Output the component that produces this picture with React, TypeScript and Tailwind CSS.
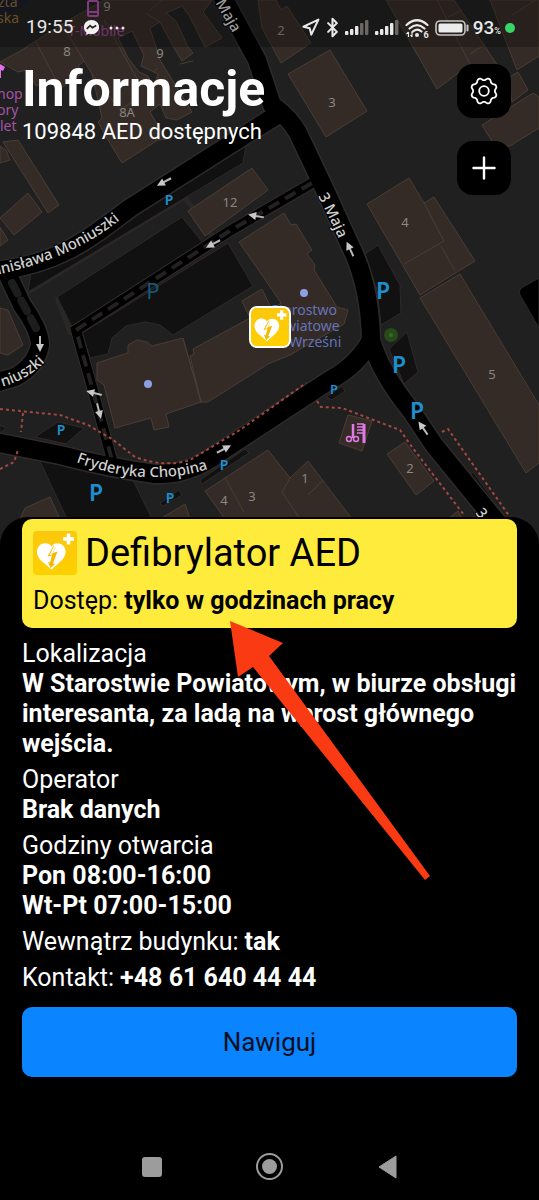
import type { ReactNode } from "react";
import { Bluetooth, Navigation } from "lucide-react";

const BUILDINGS = [
  "0,62 22,50 62,24 104,0 212,0 203,12 222,38 205,47 190,17 182,6 166,13 176,21 188,47 193,53 182,61 173,46 160,22 150,28 160,60 192,112 177,120 166,118 160,104 150,112 166,139 158,140 122,163 108,140 98,122 102,118 92,74 84,61 78,66 83,73 58,90 49,80 36,86 27,70 18,72",
  "3,142 18,140 59,205 48,213",
  "0,146 6,150 10,160 0,163",
  "0,218 28,193 42,212 14,235",
  "0,227 8,240 0,246",
  "0,308 8,310 23,345 8,355 0,353",
  "188,211 252,168 268,190 205,236",
  "239,242 284,213 291,225 296,224 312,250 307,254 315,265 314,270 337,307 348,310 344,324 290,355 268,364 208,402 201,402 190,356 194,354 193,349 250,318 242,301 262,289 272,310 281,303 262,275",
  "97,363 128,353 128,345 137,340 147,342 152,346 183,338 201,402 166,414 169,427 154,430 151,418 115,428 104,385 97,380",
  "258,0 276,0 281,10 287,6 311,43 281,63 262,28",
  "288,74 330,50 367,111 326,137",
  "386,0 454,0 498,66 484,74 470,64 437,89",
  "490,0 539,0 539,56 517,70",
  "508,78 518,72 528,90 512,102",
  "482,125 533,93 539,97 539,128 510,146 495,146",
  "367,204 409,178 424,203 434,197 475,261 420,295",
  "420,298 460,274 539,405 539,463 526,473",
  "387,454 405,442 434,481 416,495",
  "348,415 372,421 362,451 339,443",
  "205,491 268,450 290,478 308,461 352,519 225,519",
  "20,519 25,508 50,497 60,519",
  "160,519 185,504 190,519",
  "448,519 458,511 462,519",
];

const BUILDING_LINES =
  "M404 264L444 241L424 203M441 246L455 271M36 42L58 84M104 20L140 84M140 84L158 68M146 13L160 22M150 10L165 -2M437 0L470 64M448 17L462 10M470 54L484 45M225 478L244 512M290 478L282 492L300 519M308 495L323 480M62 24L84 61M92 74L120 110M120 110L135 100M193 61L180 64M183 338L201 402M512 15L539 -2";

const PARKING = [
  "31,272 247,140 243,163 28,292",
  "57,297 182,217 203,243 72,327",
  "82,333 228,243 253,286 173,335 160,325 145,322 126,326 112,338 108,354 90,358",
  "38,457 133,480 152,519 67,519",
  "35,437 58,422 84,428 66,444",
  "200,480 245,449 249,453 202,484",
  "160,503 179,490 182,495 163,506",
  "365,254 378,245 400,285 401,313 381,325 377,290",
  "389,349 407,332 418,372 404,384",
  "466,477 473,472 507,519 492,519",
  "326,397 342,386 345,391 332,400",
  "0,425 6,428 0,433",
];

const ROADS = [
  "M-5 271C60 264 90 238 130 208L245 135L285 110",
  "M218 -12L257 60L272 105Q290 118 298 133L325 190L350 245Q370 285 371 340",
  "M371 340Q358 365 330 380L220 452Q190 475 155 474Q110 468 60 455L-5 442",
  "M371 340Q380 372 412 412L434 445L500 526",
  "M8 275L22 305Q40 330 40 345Q36 366 15 377L-5 383",
];

const LANE = "M312 183L228 232L76 330L90 380L112 460";

const FOOTWAYS =
  "M0 409L60 415L88 425L112 439L135 457Q165 468 190 460L240 430L306 383M23 413L21 432M0 469L14 462L18 450M317 401L321 407L342 408L400 430L412 447L464 515M442 432L448 429L510 517";

const HOUSE_NUMBERS: [number, number, string][] = [
  [67, 56, "8"], [160, 58, "9"], [107, 11, "9"], [127, 117, "8A"], [281, 35, "2"],
  [332, 107, "3"], [230, 207, "12"], [405, 227, "4"], [492, 379, "5"], [410, 473, "2"],
  [305, 483, "1"], [224, 505, "4"], [252, 501, "3"],
];

const PARKING_SIGNS: [number, number, number][] = [
  [169, 205, 14], [61, 435, 14], [224, 470, 14], [170, 503, 14], [334, 394, 13],
  [96, 501, 23], [383, 299, 23], [399, 373, 23], [417, 419, 23],
];

const ARROWS: [number, number, number][] = [
  [164, 182, 152], [213, 244, 152], [256, 216, 190], [350, 249, 245], [40, 344, 90],
  [94, 393, 195], [99, 411, 76], [224, 449, -28], [423, 428, 235],
];

function Label({ x, y, size = 14, weight = 400, fill = "#8a8683", children }: {
  x: number; y: number; size?: number; weight?: number; fill?: string; children: ReactNode;
}) {
  return (
    <text x={x} y={y} fontSize={size} fontWeight={weight} fill={fill} textAnchor="middle">
      {children}
    </text>
  );
}

function StreetMap() {
  return (
    <svg
      className="absolute inset-x-0 top-0 h-[560px] w-full bg-[#202020] font-['Noto_Sans',sans-serif]"
      viewBox="0 0 539 560"
      preserveAspectRatio="xMidYMin slice"
      role="img"
      aria-label="Mapa"
    >
      <defs>
        <path id="moniuszki" d="M-40 281Q60 268 120 220" />
        <path id="moniuszki-south" d="M-18 390Q18 388 45 362" />
        <path id="chopina" d="M76 462Q150 490 214 467" />
        <path id="maja" d="M318 196Q334 226 346 256" />
      </defs>
      <path d="M28 292L185 197L215 240L70 332L57 297M80 345L106 440M520 0V60" stroke="#2a2727" strokeWidth="5" fill="none" />
      {PARKING.map((p) => (
        <polygon key={p} points={p} fill="#111111" stroke="#302927" />
      ))}
      {BUILDINGS.map((p) => (
        <polygon key={p} points={p} fill="#342b27" stroke="#4a3d34" />
      ))}
      <path d={BUILDING_LINES} stroke="#4a3d34" fill="none" />
      <polygon points="118,38 132,31 144,55 141,66 158,74 154,86 148,76 139,72 128,58" fill="#202020" stroke="#4a3d34" />
      <path d="M0 0H28V4L0 18Z" fill="#1c1d2a" />
      <path d={LANE} stroke="#332b29" strokeWidth="12" fill="none" />
      {ROADS.map((d) => (
        <path key={d} d={d} stroke="#2d2a2a" strokeWidth="21" fill="none" />
      ))}
      <path d={LANE} stroke="#000" strokeWidth="10" fill="none" />
      <path d={LANE} stroke="#222" strokeWidth="4" strokeDasharray="12 7" fill="none" />
      {ROADS.map((d) => (
        <path key={d} d={d} stroke="#000" strokeWidth="18" fill="none" strokeLinejoin="round" />
      ))}
      <path d="M12 283L36 328" stroke="#1d1d1d" strokeWidth="8" strokeDasharray="12 8" strokeLinecap="round" fill="none" />
      <path d="M539 278L523 287Q518 290 520 295L539 328Z" fill="#000" stroke="#2d2a2a" />
      <path d={FOOTWAYS} stroke="#a3483f" strokeWidth="2" strokeDasharray="3 3" fill="none" />
      {ARROWS.map(([x, y, angle]) => (
        <g key={`${x}-${y}`} transform={`translate(${x} ${y}) rotate(${angle})`}>
          <path d="M-8 0H2" stroke="#b8b8b8" strokeWidth="2" />
          <path d="M8 0L0 -4V4Z" fill="#c8c8c8" />
        </g>
      ))}
      <circle cx="391" cy="335" r="7" fill="#264a18" />
      <circle cx="391" cy="335" r="2" fill="#3a6a26" />
      <circle cx="304" cy="293" r="4" fill="#8d9fe0" />
      <circle cx="148" cy="384" r="4" fill="#8d9fe0" />

      {HOUSE_NUMBERS.map(([x, y, n]) => (
        <Label key={`${x}-${y}`} x={x} y={y} size={13}>{n}</Label>
      ))}
      {PARKING_SIGNS.map(([x, y, size]) => (
        <Label key={`${x}-${y}`} x={x} y={y} size={size} weight={600} fill="#1c8fd0">P</Label>
      ))}
      <Label x={153} y={299} size={22} fill="#17577c">P</Label>
      <g fontSize="15" fill="#d0d0d0" stroke="#000" strokeWidth="2" paintOrder="stroke" fontWeight="500">
        <text><textPath href="#moniuszki" startOffset="100%" textAnchor="end">Stanisława Moniuszki</textPath></text>
        <text><textPath href="#moniuszki-south" startOffset="100%" textAnchor="end">niuszki</textPath></text>
        <text><textPath href="#chopina">Fryderyka Chopina</textPath></text>
        <text><textPath href="#maja">3 Maja</textPath></text>
        <text transform="translate(209 -8) rotate(60)">3 Maja</text>
        <text transform="translate(475 513) rotate(52)">3</text>
      </g>
      <g fontSize="14">
        <Label x={304} y={315} fill="#6473b8">Starostwo</Label>
        <Label x={304} y={331} fill="#6473b8">Powiatowe</Label>
        <Label x={304} y={347} fill="#6473b8">we Wrześni</Label>
      </g>
      <g fill="#a452a4">
        <Label x={96} y={36} fill="#93458f">T-Mobile</Label>
        <text x="-3" y="99" fontSize="14">hop</text>
        <text x="-8" y="115" fontSize="14">tory</text>
        <text x="0" y="131" fontSize="14">let</text>
        <path d="M0 64L5 67L3 71L1 70V78H-4V64Z" fill="#e070e8" />
      </g>
      <g fontSize="14" fill="#8b6a35">
        <text x="-2" y="7">zta</text>
        <text x="-3" y="23">ska</text>
      </g>
      <rect x="88" y="1" width="10" height="15" rx="1.5" fill="none" stroke="#a850a8" strokeWidth="2" />
      <path d="M88 12H98" stroke="#a850a8" strokeWidth="2" />
      <g stroke="#e27ae6" fill="none" strokeWidth="1.5">
        <circle cx="349" cy="439" r="2.5" />
        <circle cx="356" cy="439" r="2.5" />
        <path d="M353 438V424" strokeWidth="2.5" />
        <path d="M364 424V443" strokeWidth="3" />
        <path d="M357 424H364M357 427H363M357 430H363M357 433H363" />
      </g>
    </svg>
  );
}

function AedIcon({ className }: { className?: string }) {
  return (
    <svg viewBox="0 0 44 44" className={className} aria-hidden="true">
      <defs>
        <linearGradient id="aed" x1="0" y1="0" x2="0" y2="1">
          <stop offset="0" stopColor="#fbc70d" />
          <stop offset="1" stopColor="#ffd000" />
        </linearGradient>
      </defs>
      <rect width="44" height="44" rx="4" fill="url(#aed)" />
      <path d="M18.500 15.500C16 11.500 10 11.200 6.500 14.500C2.500 18.500 3.500 25 8 29.500L18.500 38.500L28.500 29.500C33 25 34 19 30.500 15C27 11.300 21 11.500 18.500 15.500Z" fill="#fff" />
      <path d="M20.500 14.500L14.500 25.500L19 24.500L17 31.500L15 31L17.500 37L22 33L20 32.500L24.500 20.500L20 22L22.500 16Z" fill="#f6b900" />
      <path d="M19 23.500L22.500 15.500L21 15L16.500 24.300Z" fill="#fff" />
      <path d="M35.500 2.500V13.500M30 8H41" stroke="#fff" strokeWidth="3.600" />
    </svg>
  );
}

const GEAR_OUTLINE =
  Array.from({ length: 97 }, (_, i) => {
    const angle = (i / 96) * Math.PI * 2;
    const r = 12 - 1.1 * Math.tanh(1.2 * Math.cos(8 * angle)) / Math.tanh(1.2);
    return `${i ? "L" : "M"}${(15 + r * Math.cos(angle)).toFixed(2)} ${(15 + r * Math.sin(angle)).toFixed(2)}`;
  }).join("") + "Z";

function SignalBars({ strength }: { strength: number }) {
  return (
    <svg viewBox="0 0 24 16" className="h-4 w-6" aria-hidden="true">
      {[4, 6, 9, 12, 15].map((h, i) => (
        <rect key={h} x={i * 5} y={15 - h} width="3.400" height={h} rx="1" fill={i < strength ? "#e8e8e8" : "#6b6663"} />
      ))}
    </svg>
  );
}

function StatusBar() {
  return (
    <div className="flex h-[47px] items-center justify-between bg-black/25 pt-2 pr-6 pl-[26px] text-[#e8e8e8]">
      <div className="flex items-center gap-2">
        <span className="text-[19px]">19:55</span>
        <svg viewBox="0 0 18 18" className="ml-[2px] size-[17px]" aria-hidden="true">
          <path d="M9 1C4.300 1 1 4.300 1 8.500C1 11 2 13 3.600 14.300V17L6.200 15.700C7 16 8 16.100 9 16.100C13.700 16.100 17 12.800 17 8.500S13.700 1 9 1Z" fill="#f0f0f0" />
          <path d="M4 10.500L7.500 7L10 9.200L14 6.800" stroke="#2a2320" strokeWidth="1.800" fill="none" />
        </svg>
        <svg viewBox="0 0 18 4" className="h-1 w-[18px]" aria-hidden="true">
          <g fill="#e8e8e8"><circle cx="3" cy="2" r="1.500" /><circle cx="9" cy="2" r="1.500" /><circle cx="15" cy="2" r="1.500" /></g>
        </svg>
      </div>
      <div className="flex items-center gap-[6px]">
        <Navigation className="size-[19px]" strokeWidth={2.6} aria-hidden="true" />
        <Bluetooth className="-mx-1 size-[21px]" strokeWidth={2.4} aria-hidden="true" />
        <SignalBars strength={3} />
        <SignalBars strength={4} />
        <svg viewBox="0 0 24 20" className="h-5 w-6" aria-hidden="true">
          <g fill="none" stroke="#e8e8e8" strokeWidth="2.200" strokeLinecap="round">
            <path d="M1.500 7Q12 -2.500 22.500 7" />
            <path d="M4.500 10.500Q12 3.800 19.500 10.500" />
            <path d="M7.500 13.800Q12 9.500 16.500 13.500" />
          </g>
          <circle cx="12" cy="17" r="2" fill="#e8e8e8" />
          <path d="M3.500 19V14M1.500 16L3.500 14M7 14V19M5.500 17L7 19" stroke="#e8e8e8" strokeWidth="1.200" />
          <text x="18.500" y="19.500" fontSize="9" fontWeight="700" fill="#e8e8e8">6</text>
        </svg>
        <svg viewBox="0 0 34 18" className="h-[18px] w-[34px]" aria-hidden="true">
          <rect x="1" y="2" width="29" height="14" rx="4" fill="none" stroke="#c8c8c8" strokeWidth="1.600" />
          <rect x="3.500" y="4.500" width="24" height="9" rx="1.500" fill="#ececec" />
          <path d="M32.500 6.500V11.500" stroke="#c8c8c8" strokeWidth="2" strokeLinecap="round" />
        </svg>
        <span className="-ml-[2px] flex items-baseline text-[19px] leading-none font-medium">
          93<span className="text-[9px]">%</span>
        </span>
        <span className="-ml-[2px] size-[10px] rounded-full bg-[#38d667]" />
      </div>
    </div>
  );
}

function Field({ label, children }: { label: string; children: ReactNode }) {
  return (
    <div>
      <dt>{label}</dt>
      <dd className="font-bold">{children}</dd>
    </div>
  );
}

function InlineField({ label, children }: { label: string; children: ReactNode }) {
  return (
    <div className="flex gap-[6px]">
      <dt>{label}</dt>
      <dd className="font-bold">{children}</dd>
    </div>
  );
}

export default function App() {
  return (
    <div className="relative flex min-h-screen flex-col overflow-hidden bg-black font-[Roboto,sans-serif] text-white">
      <StreetMap />
      <header className="relative h-[517px]">
        <StatusBar />
        <div className="flex items-start justify-between pt-[17px] pr-7 pl-[22px]">
          <div>
            <h1 className="text-[50px] leading-[50px] font-bold">Informacje</h1>
            <p className="text-[22px] leading-9">109848 AED dostępnych</p>
          </div>
          <div className="flex flex-col gap-[23px]">
            <button type="button" aria-label="Ustawienia" className="flex size-[54px] items-center justify-center rounded-2xl bg-black">
              <svg viewBox="0 0 30 30" className="size-[30px]" fill="none" stroke="#fff" strokeWidth="1.800" strokeLinejoin="round" aria-hidden="true">
                <path d={GEAR_OUTLINE} />
                <circle cx="15" cy="15" r="4.800" />
              </svg>
            </button>
            <button type="button" aria-label="Dodaj" className="flex size-[54px] items-center justify-center rounded-2xl bg-black">
              <svg viewBox="0 0 24 24" className="size-6" stroke="#fff" strokeWidth="2.400" strokeLinecap="round" aria-hidden="true">
                <path d="M12 1.500V22.500M1.500 12H22.500" />
              </svg>
            </button>
          </div>
        </div>
        <button type="button" aria-label="AED" className="absolute top-[306px] left-1/2 -ml-[21px] size-[42px] overflow-hidden rounded-lg border-2 border-white bg-[#ffcc06]">
          <AedIcon className="size-full" />
        </button>
      </header>

      <main className="relative flex-1 rounded-t-[28px] bg-black px-[22px] pt-[2px]">
        <section className="rounded-[10px] bg-[#ffeb3b] px-[11px] pt-[10px] pb-3 text-black">
          <h2 className="flex items-center gap-2 text-[38px] leading-[48px]">
            <AedIcon className="size-11" />
            Defibrylator AED
          </h2>
          <p className="mt-[9px] text-[25px] leading-[30px]">
            Dostęp: <strong className="font-bold">tylko w godzinach pracy</strong>
          </p>
        </section>

        <dl className="mt-[11px] flex flex-col gap-[6px] text-[25px] leading-[30px]">
          <Field label="Lokalizacja">
            W Starostwie Powiatowym, w biurze obsługi interesanta, za ladą na wprost głównego wejścia.
          </Field>
          <Field label="Operator">Brak danych</Field>
          <Field label="Godziny otwarcia">
            <p>Pon 08:00-16:00</p>
            <p>Wt-Pt 07:00-15:00</p>
          </Field>
          <InlineField label="Wewnątrz budynku:">tak</InlineField>
          <InlineField label="Kontakt:">+48 61 640 44 44</InlineField>
        </dl>

        <button type="button" className="mt-[14px] h-[70px] w-full rounded-[10px] bg-[#0a84ff] text-[26px] text-[#0a0f1e]">
          Nawiguj
        </button>

        <svg viewBox="0 0 202 262" className="pointer-events-none absolute top-[103px] left-[229px] h-[262px] w-[202px]" aria-hidden="true">
          <path d="M1 1L54 23L40 36L201 256L196 260L24 47L9 57Z" fill="#fa3a12" />
        </svg>
      </main>

      <nav className="relative flex items-center justify-center gap-[91px] pb-5" aria-label="System">
        <button type="button" aria-label="Ostatnie" className="flex size-[27px] items-center justify-center">
          <span className="size-5 rounded-[3px] bg-[#9c9c9c]" />
        </button>
        <button type="button" aria-label="Ekran główny" className="flex size-[27px] items-center justify-center rounded-full border-2 border-[#9c9c9c]">
          <span className="size-[15px] rounded-full bg-[#9c9c9c]" />
        </button>
        <button type="button" aria-label="Wstecz" className="flex size-[27px] items-center justify-center">
          <svg viewBox="0 0 20 24" className="h-6 w-5" aria-hidden="true">
            <path d="M1 12L18 1V23Z" fill="#9c9c9c" stroke="#9c9c9c" strokeLinejoin="round" />
          </svg>
        </button>
      </nav>
    </div>
  );
}
